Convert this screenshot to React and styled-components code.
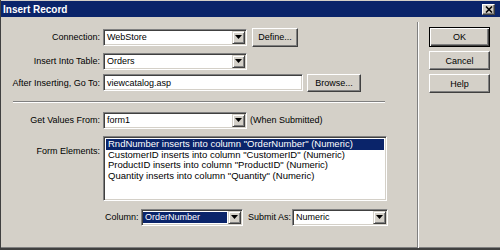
import React from 'react'
import styled, { createGlobalStyle } from 'styled-components'

const GlobalStyle = createGlobalStyle`
  html, body {
    margin: 0;
    padding: 0;
    background: #d4d0c8;
  }
  body {
    font-family: "Liberation Sans", Arial, sans-serif;
    font-size: 9px;
    color: #000;
  }
  * {
    box-sizing: border-box;
  }
`

const Window = styled.div`
  width: 500px;
  height: 250px;
  display: flex;
  flex-direction: column;
  background: #d4d0c8;
  border-left: 1px solid #404040;
  border-bottom: 2px solid #404040;
  box-shadow: inset 0 -1px #808080;
  padding-top: 1px;
  overflow: hidden;
`

const TitleBar = styled.div`
  height: 16px;
  flex-shrink: 0;
  display: flex;
  align-items: center;
  justify-content: space-between;
  padding: 0 5px 0 2px;
  background: #0a246a;
  color: #fff;
  font-weight: bold;
  font-size: 10px;
`

const CloseButton = styled.div`
  width: 13px;
  height: 11px;
  display: flex;
  align-items: center;
  justify-content: center;
  background: #d4d0c8;
  border: 1px solid;
  border-color: #fff #404040 #404040 #fff;
  box-shadow: inset -1px -1px #808080;
`

const Body = styled.div`
  flex: 1;
  display: flex;
`

const FormPanel = styled.div`
  width: 416px;
  flex-shrink: 0;
  display: flex;
  flex-direction: column;
  padding-top: 9px;
`

const Row = styled.div`
  display: flex;
  align-items: ${props => (props.$top ? 'flex-start' : 'center')};
  height: ${props => props.$h || 22}px;
  margin-top: ${props => props.$mt || 0}px;
  padding-left: ${props => props.$pl || 0}px;
`

const Label = styled.div`
  width: 99px;
  flex-shrink: 0;
  margin-right: 3px;
  text-align: right;
  white-space: nowrap;
  padding-top: ${props => props.$pt || 0}px;
`

const InlineLabel = styled.div`
  width: ${props => props.$w}px;
  margin-left: ${props => props.$ml || 0}px;
  flex-shrink: 0;
  white-space: nowrap;
`

const Sunken = styled.div`
  background: #fff;
  border: 1px solid;
  border-color: #808080 #fff #fff #808080;
  box-shadow: inset 1px 1px #404040, inset -1px -1px #d4d0c8;
`

const SelectBox = styled(Sunken)`
  width: ${props => props.$w}px;
  height: 17px;
  flex-shrink: 0;
  display: flex;
  align-items: center;
  padding: 1px;
`

const TextInput = styled(Sunken)`
  width: ${props => props.$w}px;
  height: 17px;
  flex-shrink: 0;
  display: flex;
  align-items: center;
  padding: 1px 1px 1px 3px;
`

const Value = styled.div`
  flex: 1;
  align-self: stretch;
  display: flex;
  align-items: center;
  margin: 1px 1px 1px 0;
  padding-left: 2px;
  white-space: nowrap;
  background: ${props => (props.$focused ? '#0a246a' : 'transparent')};
  color: ${props => (props.$focused ? '#fff' : '#000')};
`

const ArrowButton = styled.div`
  width: 13px;
  height: 13px;
  flex-shrink: 0;
  display: flex;
  align-items: center;
  justify-content: center;
  background: #d4d0c8;
  border: 1px solid;
  border-color: #d4d0c8 #404040 #404040 #d4d0c8;
  box-shadow: inset 1px 1px #fff, inset -1px -1px #808080;
`

const Button = styled.div`
  width: ${props => props.$w}px;
  height: ${props => props.$h || 19}px;
  margin-left: ${props => props.$ml || 0}px;
  flex-shrink: 0;
  display: flex;
  align-items: center;
  justify-content: center;
  background: #d4d0c8;
  border: 1px solid;
  border-color: ${props => (props.$default ? '#000' : '#fff #404040 #404040 #fff')};
  box-shadow: ${props =>
    props.$default
      ? 'inset 1px 1px #fff, inset -1px -1px #404040, inset -2px -2px #808080'
      : 'inset -1px -1px #808080'};
`

const Aside = styled.span`
  margin-left: 3px;
  white-space: nowrap;
`

const ListBox = styled(Sunken)`
  width: 284px;
  height: 65px;
  flex-shrink: 0;
  padding: 2px;
  font-size: 9.5px;
`

const ListItem = styled.div`
  height: 10.5px;
  line-height: 10.5px;
  padding-left: 2px;
  white-space: nowrap;
  background: ${props => (props.$selected ? '#0a246a' : 'transparent')};
  color: ${props => (props.$selected ? '#fff' : '#000')};
`

const HLine = styled.div`
  width: 372px;
  height: 2px;
  margin: 8px 0 0 12px;
  border-top: 1px solid #808080;
  border-bottom: 1px solid #fff;
`

const VLine = styled.div`
  width: 2px;
  margin-top: 5px;
  border-left: 1px solid #808080;
  border-right: 1px solid #fff;
`

const ButtonColumn = styled.div`
  display: flex;
  flex-direction: column;
  gap: 4px;
  padding: 10px 0 0 10px;
`

const Arrow = () => (
  <svg width="7" height="4" viewBox="0 0 7 4">
    <polygon points="0,0 7,0 3.5,4" fill="#000" />
  </svg>
)

const Select = ({ w, value, focused }) => (
  <SelectBox $w={w}>
    <Value $focused={focused}>{value}</Value>
    <ArrowButton>
      <Arrow />
    </ArrowButton>
  </SelectBox>
)

const items = [
  'RndNumber inserts into column "OrderNumber" (Numeric)',
  'CustomerID inserts into column "CustomerID" (Numeric)',
  'ProductID inserts into column "ProductID" (Numeric)',
  'Quantity inserts into column "Quantity" (Numeric)',
]

export default function App() {
  return (
    <>
      <GlobalStyle />
      <Window>
        <TitleBar>
          <span>Insert Record</span>
          <CloseButton>
            <svg width="8" height="7" viewBox="0 0 8 7">
              <path d="M1 0.5 L7 6.5 M7 0.5 L1 6.5" stroke="#000" strokeWidth="1.6" />
            </svg>
          </CloseButton>
        </TitleBar>
        <Body>
          <FormPanel>
            <Row>
              <Label>Connection:</Label>
              <Select w={144} value="WebStore" />
              <Button $w={46} $ml={5}>Define...</Button>
            </Row>
            <Row $mt={2}>
              <Label>Insert Into Table:</Label>
              <Select w={144} value="Orders" />
            </Row>
            <Row $h={21}>
              <Label>After Inserting, Go To:</Label>
              <TextInput $w={200}>viewcatalog.asp</TextInput>
              <Button $w={54} $h={18} $ml={4}>Browse...</Button>
            </Row>
            <HLine />
            <Row $mt={6}>
              <Label>Get Values From:</Label>
              <Select w={144} value="form1" />
              <Aside>(When Submitted)</Aside>
            </Row>
            <Row $mt={5} $h={65} $top>
              <Label $pt={10}>Form Elements:</Label>
              <ListBox>
                {items.map((text, i) => (
                  <ListItem key={text} $selected={i === 0}>
                    {text}
                  </ListItem>
                ))}
              </ListBox>
            </Row>
            <Row $mt={5} $pl={104}>
              <InlineLabel $w={36}>Column:</InlineLabel>
              <Select w={102} value="OrderNumber" focused />
              <InlineLabel $w={44} $ml={5}>Submit As:</InlineLabel>
              <Select w={96} value="Numeric" />
            </Row>
          </FormPanel>
          <VLine />
          <ButtonColumn>
            <Button $w={61} $h={20} $default>OK</Button>
            <Button $w={61}>Cancel</Button>
            <Button $w={61}>Help</Button>
          </ButtonColumn>
        </Body>
      </Window>
    </>
  )
}
